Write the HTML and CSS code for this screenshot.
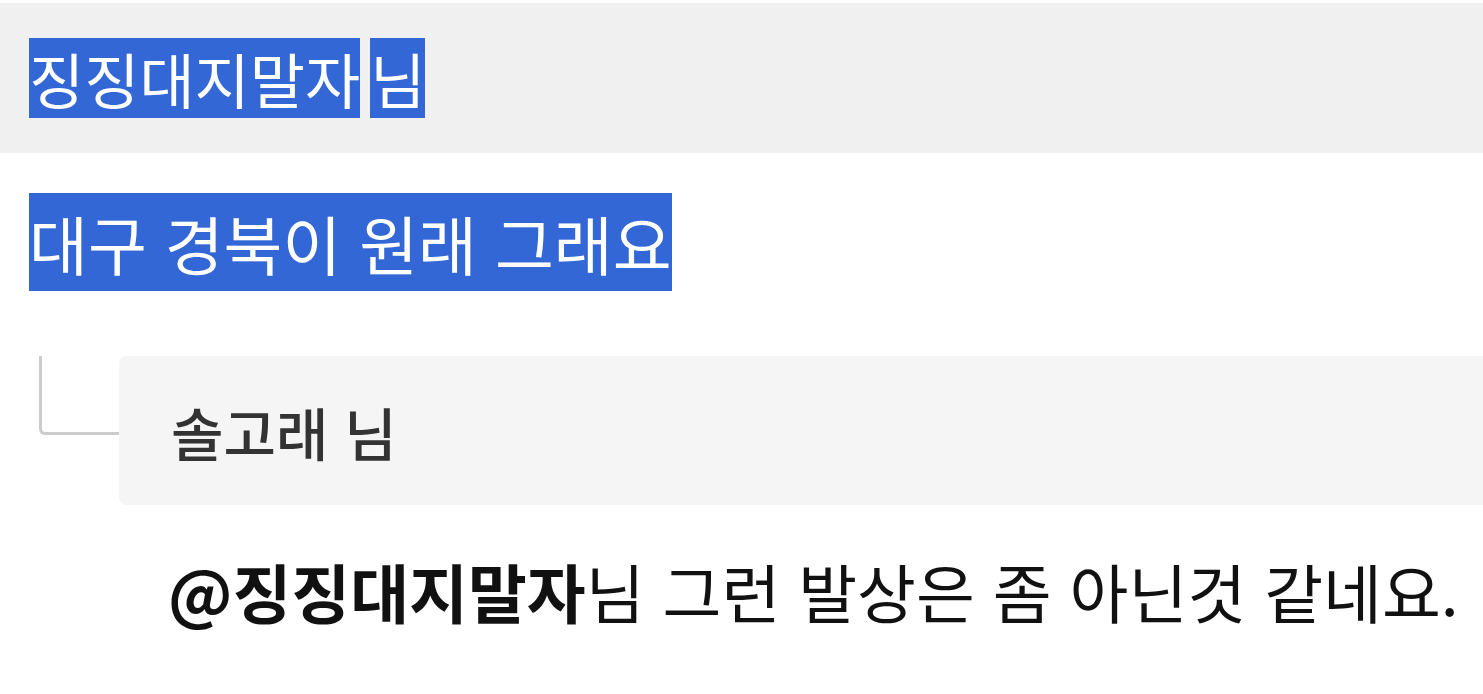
FILE: index.html
```html
<!DOCTYPE html>
<html lang="ko">
<head>
<meta charset="utf-8">
<title>댓글</title>
<link rel="stylesheet" href="styles.css">
</head>
<body>
  <div class="comment">
    <div class="comment-head">
      <span class="sel">징징대지말자</span><span class="gap"></span><span class="sel">님</span>
    </div>
    <div class="comment-text">
      <span class="sel sel-line">대구 경북이 원래 그래요</span>
    </div>
  </div>

  <div class="reply">
    <div class="reply-row">
      <div class="reply-connector"></div>
      <div class="reply-head">솔고래 님</div>
    </div>
    <p class="reply-text"><strong class="mention">@징징대지말자</strong>님 그런 발상은 좀 아닌것 같네요.</p>
  </div>
</body>
</html>
```

FILE: styles.css
```css
html {
  overflow: hidden;
}

body {
  margin: 0;
  padding-top: 3px;
  background: #ffffff;
  font-family: "Noto Sans CJK KR", "Noto Sans", sans-serif;
  color: #111111;
}

/* selected text */
.sel {
  background: #3367d6;
  color: #ffffff;
}

.comment-head {
  display: flex;
  align-items: center;
  height: 150px;
  padding-left: 29px;
  background: #f0f0f0;
  font-size: 60px;
  line-height: 1;
}

.comment-head .sel {
  display: inline-block;
  height: 80px;
  line-height: 80px;
}

.comment-head .gap {
  display: inline-block;
  width: 10px;
}

.comment-text {
  padding: 40px 0 0 29px;
  font-size: 64px;
}

.sel-line {
  display: inline-block;
  height: 98px;
  line-height: 98px;
  vertical-align: top;
}

.reply {
  padding-top: 65px;
}

.reply-row {
  display: flex;
  align-items: flex-start;
  padding-left: 39px;
  margin-right: -40px;
}

/* elbow line leading into the reply */
.reply-connector {
  flex: none;
  width: 77px;
  height: 76px;
  border-left: 3px solid #cccccc;
  border-bottom: 3px solid #cccccc;
  border-bottom-left-radius: 6px;
}

.reply-head {
  flex: 1;
  height: 149px;
  display: flex;
  align-items: center;
  padding-left: 52px;
  background: #f5f5f5;
  border-radius: 8px;
  font-size: 57px;
  font-weight: 500;
  color: #333333;
}

.reply-text {
  margin: 0;
  padding: 45px 0 0 168px;
  font-size: 64px;
  line-height: 80px;
  color: #111111;
  white-space: nowrap;
}

.mention {
  font-weight: 700;
}
```
